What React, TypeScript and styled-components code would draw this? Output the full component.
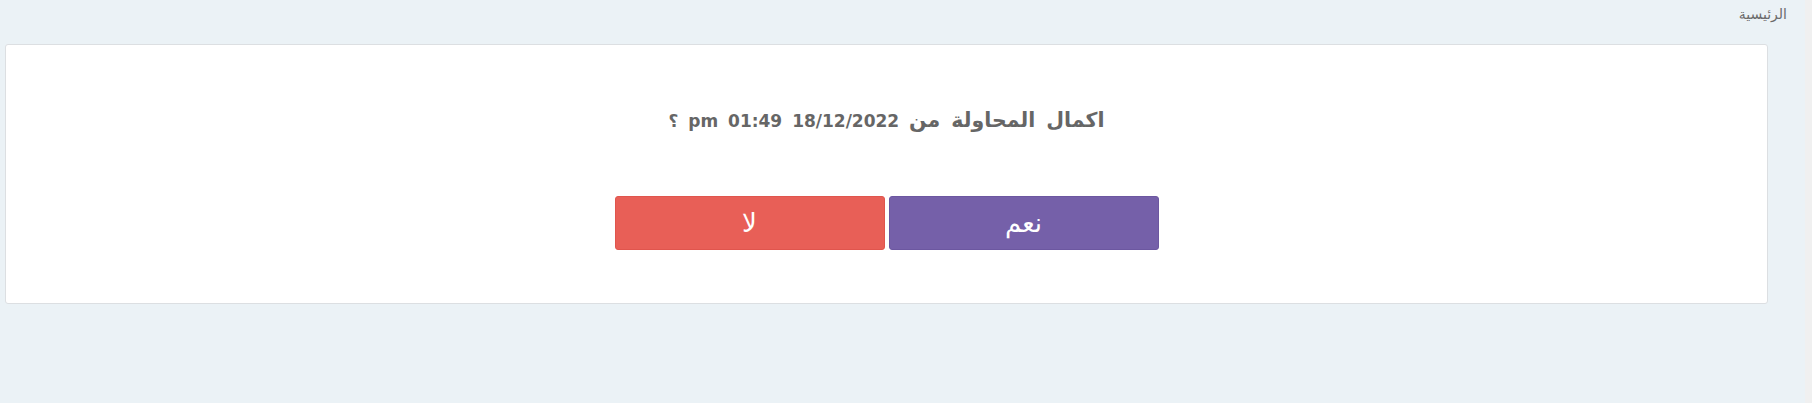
import React from "react";
import styled, { createGlobalStyle } from "styled-components";

const Global = createGlobalStyle`
  html, body { margin: 0; padding: 0; }
  body {
    background: #ebf2f6;
    font-family: "DejaVu Sans", sans-serif;
    overflow: hidden;
  }
`;

const Page = styled.div`
  display: flex;
  width: 1812px;
  height: 403px;
`;

const Main = styled.main`
  flex: 1;
  display: flex;
  flex-direction: column;
  background: #ebf2f6;
  direction: rtl;
`;

const SideStrip = styled.div`
  width: 7px;
  background: #f0f0f0;
`;

const Breadcrumb = styled.div`
  height: 44px;
  padding: 4px 18px 0 0;
  box-sizing: border-box;
  font-size: 14px;
  color: #6b6b6b;
  line-height: 20px;
`;

const Card = styled.section`
  margin: 0 37px 0 5px;
  height: 260px;
  box-sizing: border-box;
  background: #fff;
  border: 1px solid #dcdfe2;
  border-radius: 3px;
  display: flex;
  flex-direction: column;
  align-items: stretch;
`;

const Question = styled.h2`
  margin: 63px 0 0;
  text-align: center;
  font-size: 17px;
  font-weight: 700;
  color: #666;
  line-height: 24px;
  word-spacing: 4px;
`;

const ArabicPart = styled.span`
  font-size: 20.5px;
`;

const ButtonRow = styled.div`
  display: flex;
  justify-content: center;
  gap: 4px;
  margin-top: 63px;
`;

const Button = styled.button<{ $tone: "yes" | "no" }>`
  width: 270px;
  height: 54px;
  border: 1px solid ${(p) => (p.$tone === "yes" ? "#6c57a0" : "#e0554d")};
  border-radius: 3px;
  background: ${(p) => (p.$tone === "yes" ? "#7560a9" : "#e85f57")};
  color: #fff;
  font-family: "DejaVu Sans", sans-serif;
  font-size: 26px;
  line-height: 1;
  cursor: pointer;
  padding: 0;
`;

export default function App() {
  return (
    <>
      <Global />
      <Page>
        <Main>
          <Breadcrumb>الرئيسية</Breadcrumb>
          <Card>
            <Question>
              <ArabicPart>اكمال المحاولة من</ArabicPart> 18/12/2022 01:49 pm ؟
            </Question>
            <ButtonRow>
              <Button $tone="yes">نعم</Button>
              <Button $tone="no">لا</Button>
            </ButtonRow>
          </Card>
        </Main>
        <SideStrip />
      </Page>
    </>
  );
}
